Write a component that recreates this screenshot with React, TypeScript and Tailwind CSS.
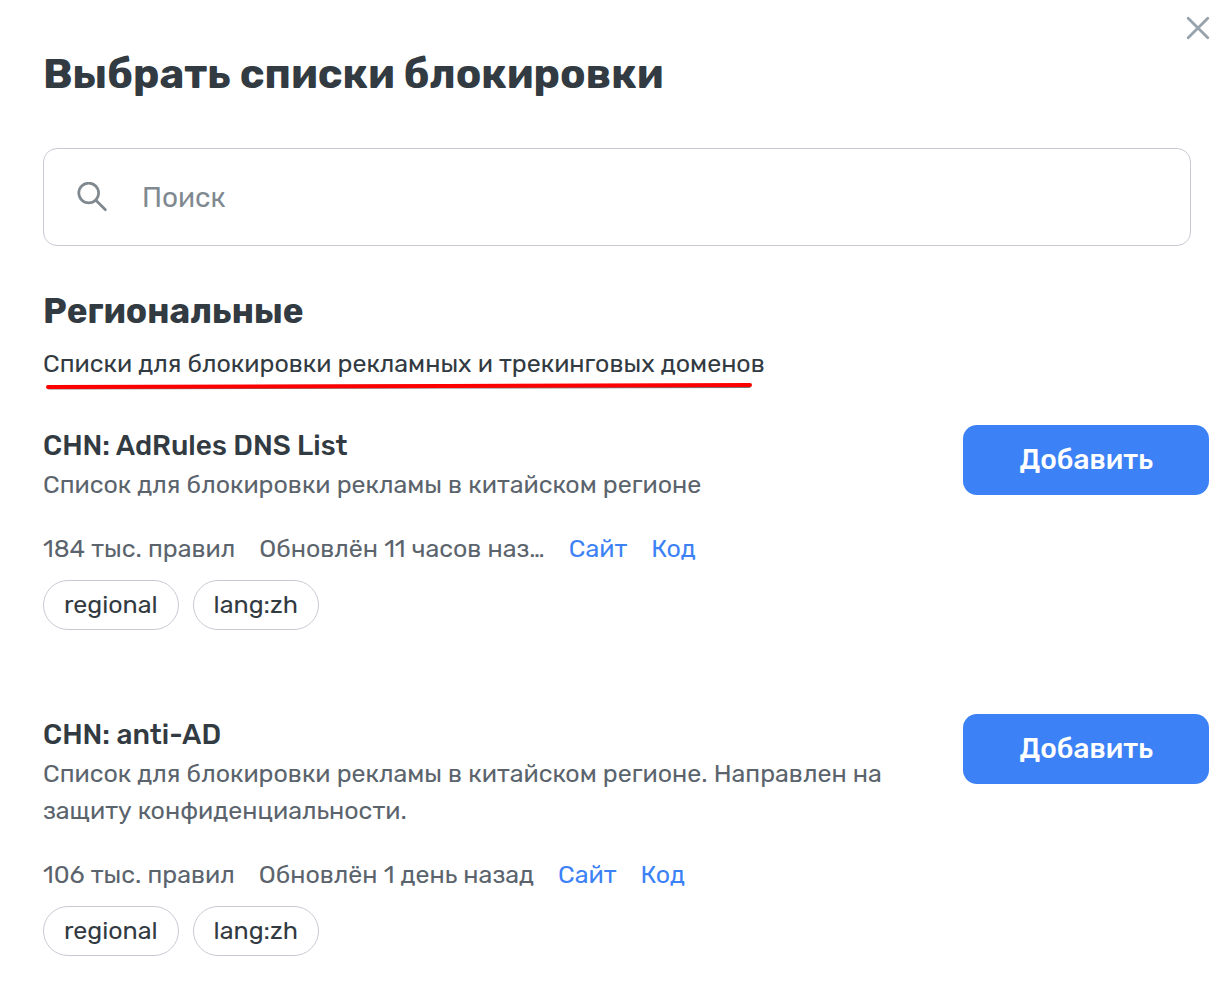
type BlockList = {
  name: string;
  description: string;
  rules: string;
  updated: string;
  tags: string[];
};

const lists: BlockList[] = [
  {
    name: "CHN: AdRules DNS List",
    description: "Список для блокировки рекламы в китайском регионе",
    rules: "184 тыс. правил",
    updated: "Обновлён 11 часов наз…",
    tags: ["regional", "lang:zh"],
  },
  {
    name: "CHN: anti-AD",
    description:
      "Список для блокировки рекламы в китайском регионе. Направлен на защиту конфиденциальности.",
    rules: "106 тыс. правил",
    updated: "Обновлён 1 день назад",
    tags: ["regional", "lang:zh"],
  },
];

function ListItem({ item }: { item: BlockList }) {
  return (
    <li className="flex items-start justify-between gap-6">
      <div className="min-w-0 max-w-[880px] flex-1">
        <h3 className="text-[28px] leading-[41px] font-medium text-[#323a42]">{item.name}</h3>
        <p className="text-[25px] leading-[37px] text-[#5b646d]">{item.description}</p>
        <div className="mt-[27px] flex flex-wrap gap-x-6 text-[25px] leading-[37px] text-[#5b646d]">
          <span>{item.rules}</span>
          <span>{item.updated}</span>
          <a href="#site" className="text-[#3c82f6]">Сайт</a>
          <a href="#source" className="text-[#3c82f6]">Код</a>
        </div>
        <ul className="mt-[13px] flex flex-wrap gap-[14px]">
          {item.tags.map((tag) => (
            <li
              key={tag}
              className="rounded-full border border-[#c9c9d4] px-5 text-[25px] leading-[48px] text-[#323a42]"
            >
              {tag}
            </li>
          ))}
        </ul>
      </div>
      <button
        type="button"
        className="h-[70px] shrink-0 rounded-[14px] bg-[#3c82f6] px-14 text-[28px] leading-[42px] font-medium text-white"
      >
        Добавить
      </button>
    </li>
  );
}

export default function App() {
  return (
    <main
      role="dialog"
      aria-labelledby="dialog-title"
      className="relative bg-white pt-[43px] pr-4 pb-[29px] pl-[43px] font-[Rubik,Roboto,sans-serif] text-[#323a42]"
    >
      <button type="button" aria-label="Закрыть" className="absolute top-[14px] right-[13px] p-0 text-[#97a3ac]">
        <svg width="28" height="28" viewBox="0 0 28 28" fill="none" stroke="currentColor" strokeWidth="2.8" strokeLinecap="round">
          <path d="M4.2 4.2l19.6 19.6M23.8 4.2L4.2 23.8" />
        </svg>
      </button>

      <h1 id="dialog-title" className="text-[42px] leading-[63px] font-bold">
        Выбрать списки блокировки
      </h1>

      <label className="mt-[42px] mr-[18px] flex h-[98px] items-center gap-[34px] rounded-[14px] border border-[#c9c9d4] px-[33px]">
        <svg width="31" height="31" viewBox="0 0 31 31" fill="none" stroke="#808990" strokeWidth="2.7" strokeLinecap="round" className="shrink-0" aria-hidden="true">
          <circle cx="11.7" cy="11" r="9.9" />
          <path d="M18.9 18.2L28.4 27.8" />
        </svg>
        <input
          type="text"
          aria-label="Поиск"
          placeholder="Поиск"
          className="w-full min-w-0 bg-transparent pt-0.5 text-[28px] leading-[42px] outline-none placeholder:text-[#808990]"
        />
      </label>

      <section className="mt-[39px]">
        <h2 className="text-[35px] leading-[52px] font-bold">Региональные</h2>
        <p className="mt-2 flex text-[25px] leading-[37px]">
          <span className="relative">
            Списки для блокировки рекламных и трекинговых доменов
            <svg className="absolute top-[37px] left-[3px]" width="706" height="8" viewBox="0 0 706 8" fill="none" strokeLinecap="round" aria-hidden="true">
              <path d="M3 5.6L400 4.6L703 4" stroke="#777" strokeWidth="4" />
              <path d="M2 5L400 4L704 3" stroke="#fe0000" strokeWidth="4" />
            </svg>
          </span>
        </p>
        <ul className="mt-[43px] flex flex-col gap-[84px]">
          {lists.map((item) => (
            <ListItem key={item.name} item={item} />
          ))}
        </ul>
      </section>
    </main>
  );
}
